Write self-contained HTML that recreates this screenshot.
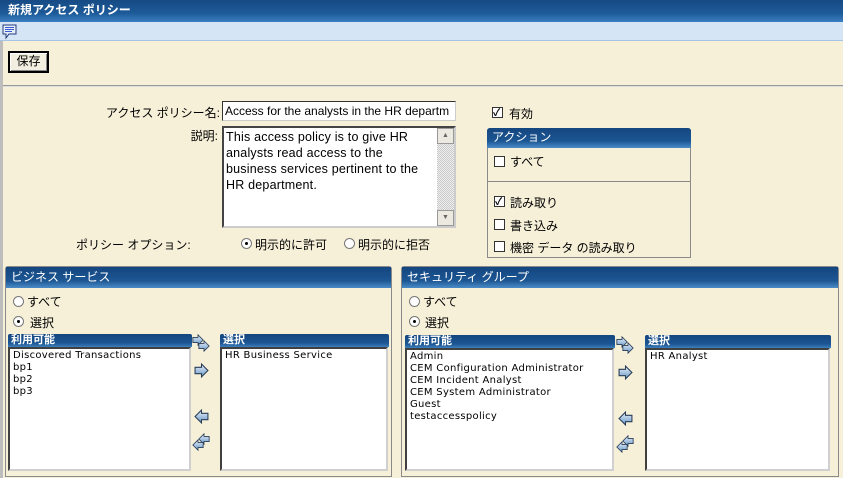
<!DOCTYPE html>
<html><head><meta charset="utf-8"><style>
*{box-sizing:border-box;margin:0;padding:0}
body{width:843px;height:478px;overflow:hidden;background:#f6f0d9;font-family:"Liberation Sans","Noto Sans CJK JP",sans-serif;font-size:12px;color:#000;position:relative}
.a{position:absolute}
.tb{background:linear-gradient(#164a84,#1d5a98 60%,#3b7fc0);color:#fff}
.hd{background:linear-gradient(#14467f,#1c5693 65%,#4a8cc8);color:#fff;font-size:12px;padding-left:5px;line-height:19px}
.lh{background:linear-gradient(#14467f,#1c5693 70%,#3d7fbd);color:#fff;font-size:11px;font-weight:bold;line-height:12px;padding-left:3px;border-radius:2px 2px 0 0}
.box{background:#fff;border:2px solid;border-color:#404040 #d0d0d0 #d0d0d0 #404040;font-family:"DejaVu Sans",sans-serif;font-size:10px;letter-spacing:0.3px;line-height:12px;padding:1px 3px}
.cb{width:11px;height:11px;border:1px solid #333;background:#fff;display:inline-block;position:absolute}
.rd{width:11px;height:11px;border-radius:50%;border:1px solid #777;background:#fff;position:absolute}
.rd.on::after{content:"";position:absolute;left:3px;top:3px;width:3px;height:3px;background:#000;border-radius:50%}
.pn{border:1px solid #8a8a8a;border-radius:3px 3px 0 0}
</style></head><body>
<div class="a tb" style="left:0;top:0;width:843px;height:22px;font-weight:bold;font-size:12px;line-height:21px;padding-left:8px">新規アクセス ポリシー</div>
<div class="a" style="left:0;top:22px;width:843px;height:19px;background:#d5e5f6;border-bottom:1px solid #a6c4e4"></div>
<svg class="a" style="left:2px;top:24px" width="16" height="16" viewBox="0 0 16 16"><path d="M1 1h13v9H7l-3 4v-4H1z" fill="#e6eefb" stroke="#223a7a"/><path d="M3 3.5h9M3 5.5h9M3 7.5h7" stroke="#3a5ad0"/></svg>
<div class="a" style="left:0;top:41px;width:3px;height:437px;background:#bdbdbd"></div>
<div class="a" style="left:8px;top:51px;width:41px;height:22px;border:2px solid #000;background:#f2eee0;box-shadow:inset 1px 1px #fff,inset -1px -1px #888;text-align:center;line-height:17px;font-size:12px">保存</div>
<div class="a" style="left:3px;top:85px;width:840px;height:2px;background:#999;border-bottom:1px solid #ddd"></div>

<div class="a" style="left:100px;top:104px;width:120px;text-align:right">アクセス ポリシー名:</div>
<div class="a" style="left:222px;top:101px;width:234px;height:20px;background:#fff;border:1px solid #333;border-right-color:#ccc;border-bottom-color:#ccc;overflow:hidden;white-space:nowrap;line-height:18px;padding-left:2px;font-size:12px">Access for the analysts in the HR departm</div>
<div class="a" style="left:160px;top:127px;width:58px;text-align:right">説明:</div>
<div class="a" style="left:222px;top:126px;width:234px;height:102px;background:#fff;border:2px solid;border-color:#444 #ccc #ccc #444"></div>
<div class="a" style="left:226px;top:129px;width:210px;font-size:12.5px;line-height:16px;letter-spacing:0.2px;white-space:nowrap">This access policy is to give HR<br>analysts read access to the<br>business services pertinent to the<br>HR department.</div>
<div class="a" style="left:437px;top:128px;width:17px;height:98px;background:repeating-conic-gradient(#c8c8c8 0 25%,#f0f0f0 0 50%) 0 0/2px 2px"></div>
<div class="a" style="left:437px;top:128px;width:17px;height:16px;background:#ece9e0;border:1px solid #999;font-size:7px;text-align:center;line-height:14px;color:#666">▲</div>
<div class="a" style="left:437px;top:210px;width:17px;height:16px;background:#ece9e0;border:1px solid #999;font-size:7px;text-align:center;line-height:14px;color:#666">▼</div>
<div class="a" style="left:76px;top:236px">ポリシー オプション:</div>
<div class="rd on" style="left:241px;top:238px"></div><div class="a" style="left:255px;top:236px">明示的に許可</div>
<div class="rd" style="left:344px;top:238px"></div><div class="a" style="left:358px;top:236px">明示的に拒否</div>

<div class="cb" style="left:492px;top:107px"></div><div class="a" style="left:493px;top:104px;font-size:10px;font-weight:bold">✓</div><div class="a" style="left:509px;top:105px">有効</div>
<div class="a pn" style="left:487px;top:128px;width:204px;height:130px"></div>
<div class="a hd" style="left:487px;top:128px;width:204px;height:20px;border-radius:3px 3px 0 0">アクション</div>
<div class="cb" style="left:494px;top:156px"></div><div class="a" style="left:510px;top:153px">すべて</div>
<div class="a" style="left:488px;top:181px;width:202px;height:1px;background:#888"></div>
<div class="cb" style="left:494px;top:196px"></div><div class="a" style="left:495px;top:193px;font-size:10px;font-weight:bold">✓</div><div class="a" style="left:510px;top:194px">読み取り</div>
<div class="cb" style="left:494px;top:219px"></div><div class="a" style="left:510px;top:217px">書き込み</div>
<div class="cb" style="left:494px;top:241px"></div><div class="a" style="left:510px;top:239px">機密 データ の読み取り</div>

<!-- business -->
<div class="a pn" style="left:5px;top:266px;width:387px;height:211px"></div>
<div class="a hd" style="left:6px;top:267px;width:385px;height:21px;line-height:20px">ビジネス サービス</div>
<div class="rd" style="left:13px;top:296px"></div><div class="a" style="left:27px;top:293px">すべて</div>
<div class="rd on" style="left:13px;top:316px"></div><div class="a" style="left:30px;top:314px">選択</div>
<div class="a lh" style="left:8px;top:334px;width:184px;height:13px">利用可能</div>
<div class="a box" style="left:8px;top:347px;width:183px;height:124px">Discovered Transactions<br>bp1<br>bp2<br>bp3</div>
<div class="a lh" style="left:220px;top:334px;width:169px;height:13px">選択</div>
<div class="a box" style="left:220px;top:347px;width:168px;height:124px">HR Business Service</div>

<!-- security -->
<div class="a pn" style="left:401px;top:266px;width:438px;height:211px"></div>
<div class="a hd" style="left:402px;top:267px;width:436px;height:21px;line-height:20px">セキュリティ グループ</div>
<div class="rd" style="left:409px;top:296px"></div><div class="a" style="left:423px;top:293px">すべて</div>
<div class="rd on" style="left:409px;top:316px"></div><div class="a" style="left:425px;top:314px">選択</div>
<div class="a lh" style="left:405px;top:335px;width:210px;height:13px">利用可能</div>
<div class="a box" style="left:405px;top:348px;width:209px;height:123px">Admin<br>CEM Configuration Administrator<br>CEM Incident Analyst<br>CEM System Administrator<br>Guest<br>testaccesspolicy</div>
<div class="a lh" style="left:645px;top:335px;width:186px;height:13px">選択</div>
<div class="a box" style="left:645px;top:348px;width:185px;height:123px">HR Analyst</div>

<svg width="0" height="0" style="position:absolute"><defs>
<linearGradient id="g" x1="0" y1="0" x2="0" y2="1"><stop offset="0" stop-color="#e8f0fa"/><stop offset="1" stop-color="#6a98c8"/></linearGradient>
<symbol id="r" viewBox="0 0 14 14"><path d="M1 4h6V1l6 6-6 6V10H1z" fill="url(#g)" stroke="#2a3e58"/></symbol>
<symbol id="l" viewBox="0 0 14 14"><path d="M13 4H7V1L1 7l6 6V10h6z" fill="url(#g)" stroke="#2a3e58"/></symbol>
</defs></svg>
<svg class="a" style="left:192px;top:334px" width="12" height="12"><use href="#r"/></svg><svg class="a" style="left:198px;top:340px" width="12" height="12"><use href="#r"/></svg>
<svg class="a" style="left:194px;top:363px" width="15" height="15"><use href="#r"/></svg>
<svg class="a" style="left:194px;top:409px" width="15" height="15"><use href="#l"/></svg>
<svg class="a" style="left:198px;top:433px" width="12" height="12"><use href="#l"/></svg><svg class="a" style="left:192px;top:439px" width="12" height="12"><use href="#l"/></svg>

<svg class="a" style="left:616px;top:336px" width="12" height="12"><use href="#r"/></svg><svg class="a" style="left:622px;top:342px" width="12" height="12"><use href="#r"/></svg>
<svg class="a" style="left:618px;top:365px" width="15" height="15"><use href="#r"/></svg>
<svg class="a" style="left:618px;top:411px" width="15" height="15"><use href="#l"/></svg>
<svg class="a" style="left:622px;top:435px" width="12" height="12"><use href="#l"/></svg><svg class="a" style="left:616px;top:441px" width="12" height="12"><use href="#l"/></svg>
</body></html>
